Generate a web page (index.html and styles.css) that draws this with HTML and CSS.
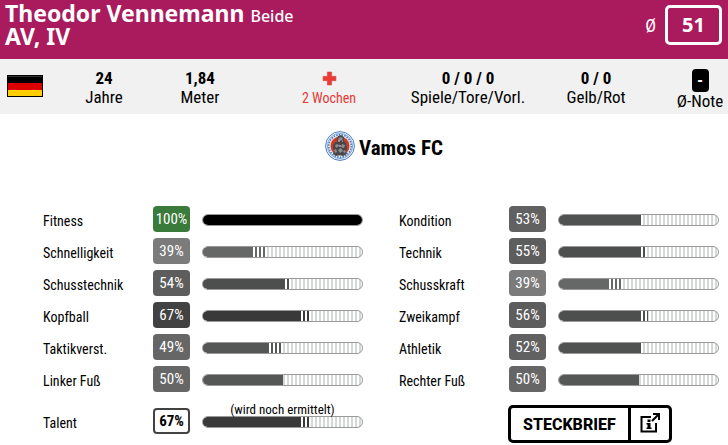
FILE: index.html
```html
<!DOCTYPE html>
<html lang="de">
<head>
  <meta charset="UTF-8">
  <meta name="viewport" content="width=device-width, initial-scale=1.0">
  <link rel="stylesheet" href="styles.css">
  <title>Theodor Vennemann</title>
</head>
<body>

<header class="player">
  <h1>Theodor Vennemann <small>Beide</small><br>AV, IV</h1>
  <div class="rating"><span>Ø</span><strong>51</strong></div>
</header>

<section class="facts">
  <div class="flag-cell">
    <svg class="flag" viewBox="0 0 36 22" role="img" aria-label="Deutschland">
      <rect width="36" height="22" fill="#000"/>
      <rect x="1" y="8" width="34" height="7" fill="#d00"/>
      <rect x="1" y="15" width="34" height="6" fill="#ffce00"/>
      <path d="M1 1.500h34" stroke="#333"/>
    </svg>
  </div>
  <div><b>24</b><span>Jahre</span></div>
  <div><b>1,84</b><span>Meter</span></div>
  <div class="injury">
    <svg viewBox="0 0 14 14" aria-hidden="true"><path d="M5 1h4v4h4v4H9v4H5V9H1V5h4z" fill="#ee3a32" stroke="#c9524c" stroke-width=".6"/></svg>
    <span>2 Wochen</span>
  </div>
  <div><b>0 / 0 / 0</b><span>Spiele/Tore/Vorl.</span></div>
  <div><b>0 / 0</b><span>Gelb/Rot</span></div>
  <div class="grade"><b>-</b><span>Ø-Note</span></div>
</section>

<div class="club">
  <svg viewBox="0 0 30 30" aria-hidden="true">
    <circle cx="15" cy="15" r="14.4" fill="#e9f1fa" stroke="#4d7fc0"/>
    <circle cx="15" cy="15" r="12.6" fill="none" stroke="#6d96cc" stroke-width=".8"/>
    <circle cx="15" cy="15" r="11.2" fill="none" stroke="#4b78b8" stroke-width="1.6" stroke-dasharray="1.5 1.2"/>
    <circle cx="15" cy="15" r="9.8" fill="#cf3a1f" stroke="#dbe6f3" stroke-width=".6"/>
    <path d="M12 8l1-3 3-1 3 2v4l2 2 1 5-1 3 1 3-4 2-3-1-4 1-3-2 1-3-1-4 1-4 3-1z" fill="#46464b"/>
    <path d="M13 8l2-2 3 1-1 2-3 1zM10 14l3-1 1 2-3 2zM17 13l3 1-1 3-3-1zM13 19l3-2 2 3-3 2zM9 19l2-1 1 3-2 1zM19 19l2 1-1 2-2-1z" fill="#8d8d92"/>
    <path d="M13 10h2M17 10h1M15 14v2" stroke="#e3d6d0"/>
  </svg>
  <h2>Vamos FC</h2>
</div>

<main class="skills">
  <div class="skill full"><span>Fitness</span><b>100%</b><div class="bar"><i style="width:100%"></i></div></div>
  <div class="skill t53"><span>Kondition</span><b>53%</b><div class="bar"><em style="width:52%"></em><i style="width:51%"></i></div></div>

  <div class="skill t39"><span>Schnelligkeit</span><b>39%</b><div class="bar"><em style="width:39%"></em><i style="width:31%"></i></div></div>
  <div class="skill t55"><span>Technik</span><b>55%</b><div class="bar"><em style="width:55%"></em><i style="width:51%"></i></div></div>

  <div class="skill t55"><span>Schusstechnik</span><b>54%</b><div class="bar"><em style="width:54%"></em><i style="width:51%"></i></div></div>
  <div class="skill t39"><span>Schusskraft</span><b>39%</b><div class="bar"><em style="width:39%"></em><i style="width:31%"></i></div></div>

  <div class="skill t67"><span>Kopfball</span><b>67%</b><div class="bar"><em style="width:67%"></em><i style="width:61%"></i></div></div>
  <div class="skill t55"><span>Zweikampf</span><b>56%</b><div class="bar"><em style="width:56%"></em><i style="width:51%"></i></div></div>

  <div class="skill t50"><span>Taktikverst.</span><b>49%</b><div class="bar"><em style="width:49%"></em><i style="width:41%"></i></div></div>
  <div class="skill t53"><span>Athletik</span><b>52%</b><div class="bar"><em style="width:52%"></em><i style="width:51%"></i></div></div>

  <div class="skill t50"><span>Linker Fuß</span><b>50%</b><div class="bar"><i style="width:50%"></i></div></div>
  <div class="skill t50"><span>Rechter Fuß</span><b>50%</b><div class="bar"><i style="width:50%"></i></div></div>

  <div class="skill t67 talent"><span>Talent</span><b>67%</b><div class="bar"><em style="width:67%"></em><i style="width:61%"></i><small>(wird noch ermittelt)</small></div></div>
  <div class="actions">
    <button class="profile" type="button">
      <span>STECKBRIEF</span>
      <svg viewBox="0 0 20 20" aria-hidden="true">
        <path d="M11 4H1.500v14.500H16V10" fill="none" stroke="#000" stroke-width="2"/>
        <path d="M12 8l6-6M13 1h6v6" fill="none" stroke="#000" stroke-width="2"/>
        <path d="M7.500 6.500h3V9h-3zM6.500 10h4v4.500h1V16h-5v-1.500h1v-3h-1z" fill="#000"/>
      </svg>
    </button>
  </div>
</main>

</body>
</html>
```
FILE: styles.css
```css
* {
  box-sizing: border-box;
}

body {
  margin: 0;
  font-family: "Roboto Condensed", Roboto, sans-serif;
  font-size: 16px;
  color: #000;
  background-color: #fff;
}

h1, h2 {
  margin: 0;
}

.player {
  display: flex;
  justify-content: space-between;
  align-items: flex-start;
  height: 59px;
  padding: 2px 6px 0 5px;
  color: #fff;
  background-color: #aa1b5e;
}

.player h1 {
  font-family: "Noto Sans", sans-serif;
  font-size: 23px;
  line-height: 23px;
}

.player small {
  font-size: 16px;
  font-weight: 500;
  line-height: 16px;
}

.rating {
  display: flex;
  align-items: center;
  gap: 9px;
  padding-top: 3px;
  font-size: 18px;
}

.rating strong {
  width: 57px;
  border: 3px solid #fff;
  border-radius: 5px;
  font-family: "Noto Sans", sans-serif;
  font-size: 20px;
  line-height: 34px;
  text-align: center;
}

.facts {
  display: grid;
  grid-template-columns: 56fr 96fr 96fr 162fr 116fr 140fr 62fr;
  height: 55px;
  padding-top: 10px;
  font-size: 17px;
  line-height: 19px;
  text-align: center;
  white-space: nowrap;
  background-color: #f1f1f1;
}

.facts b,
.facts span {
  display: block;
}

.flag-cell {
  padding: 6px 0 0 7px;
  text-align: left;
}

.flag {
  display: block;
  width: 36px;
  height: 22px;
}

.injury {
  font-size: 14px;
  color: #e53935;
}

.injury svg {
  display: block;
  width: 15px;
  height: 15px;
  margin: 2px auto 3px;
}

.grade {
  display: flex;
  flex-direction: column;
  align-items: center;
  padding-left: 6px;
}

.grade b {
  width: 17px;
  border-radius: 4px;
  line-height: 23px;
  color: #fff;
  background-color: #000;
}

.club {
  display: flex;
  justify-content: center;
  align-items: center;
  gap: 4px;
  padding: 17px 0 0 40px;
}

.club svg {
  width: 30px;
  height: 30px;
}

.club h2 {
  padding-top: 4px;
  font-size: 21px;
  line-height: 26px;
}

.skills {
  display: grid;
  grid-template-columns: 1fr 1fr;
  gap: 6px 36px;
  padding: 45px 9px 11px 43px;
}

.skill {
  --badge: #666;
  --fill: #555756;
  display: grid;
  grid-template-columns: 110px 37px 1fr;
  align-items: center;
  height: 26px;
  font-size: 14px;
}

.skill span {
  padding-top: 4px;
}

.skill b {
  height: 26px;
  border-radius: 4px;
  font-size: 15px;
  font-weight: 400;
  line-height: 26px;
  text-align: center;
  color: #fff;
  background-color: var(--badge);
}

.full {
  --badge: #3a7a3a;
  --fill: #000;
}

.t39 {
  --badge: #7b7b7b;
  --fill: #666867;
}

.t53 {
  --badge: #616161;
  --fill: #505251;
}

.t55 {
  --badge: #5d5d5d;
  --fill: #4d4f4e;
}

.t67 {
  --badge: #424242;
  --fill: #393939;
}

.bar {
  position: relative;
  display: grid;
  height: 12px;
  margin: 2px 0 0 12px;
  border: 1px solid #999;
  border-radius: 6px;
  background: repeating-linear-gradient(90deg, #d4d9d8 0 2px, #fff 2px 4px);
}

.bar i,
.bar em {
  grid-area: 1 / 1;
  border-radius: 5px 0 0 5px;
}

.bar i {
  background-color: var(--fill);
}

.bar em {
  background: repeating-linear-gradient(90deg, var(--fill) 0 2px, #fff 2px 4px);
}

.full .bar i {
  border-radius: 5px;
}

.talent,
.actions {
  margin-top: 10px;
}

.talent b {
  border: 2px solid var(--badge);
  font-weight: 700;
  line-height: 22px;
  color: #000;
  background-color: #fff;
}

/* caption lies across the top edge of the bar */
.bar small {
  position: absolute;
  bottom: 100%;
  width: 100%;
  font-size: 13px;
  line-height: 15px;
  text-align: center;
}

.actions {
  height: 26px;
  padding-left: 109px;
}

.profile {
  display: flex;
  align-items: stretch;
  height: 38px;
  margin-top: -3px;
  padding: 0;
  border: 3px solid #000;
  border-radius: 5px;
  font-family: Roboto, sans-serif;
  font-size: 16px;
  font-weight: 800;
  line-height: 33px;
  color: #000;
  background-color: #fff;
  cursor: pointer;
}

.profile span {
  padding: 0 12px;
  border-right: 3px solid #000;
}

.profile svg {
  width: 20px;
  height: 20px;
  margin: 5px 9px;
}
```
